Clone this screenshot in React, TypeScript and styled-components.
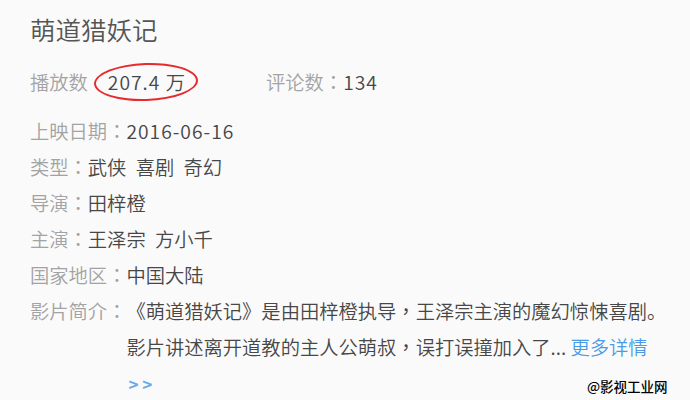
import React from "react";
import styled, { createGlobalStyle } from "styled-components";

const GlobalStyle = createGlobalStyle`
  html, body {
    margin: 0;
    padding: 0;
    background: #fafafa;
  }
  body {
    font-family: "Noto Sans CJK SC", "Microsoft YaHei", "Liberation Sans", sans-serif;
  }
`;

interface IInfoItem {
  label: string;
  value: string;
  numeric?: boolean;
}

const infoList: IInfoItem[] = [
  { label: "上映日期", value: "2016-06-16", numeric: true },
  { label: "类型", value: "武侠 喜剧 奇幻" },
  { label: "导演", value: "田梓橙" },
  { label: "主演", value: "王泽宗 方小千" },
  { label: "国家地区", value: "中国大陆" }
];

const App: React.FC = () => {
  return (
    <>
      <GlobalStyle />
      <Page>
        <Title>萌道猎妖记</Title>
        <Stats>
          <StatItem width={236}>
            <Label>播放数</Label>
            <Marked numeric>207.4 万</Marked>
          </StatItem>
          <StatItem>
            <Label>
              评论数<Colon>：</Colon>
            </Label>
            <Value numeric>134</Value>
          </StatItem>
        </Stats>
        <InfoList>
          {infoList.map(item => (
            <InfoRow key={item.label}>
              <Label>
                {item.label}
                <Colon>：</Colon>
              </Label>
              <Value numeric={item.numeric}>{item.value}</Value>
            </InfoRow>
          ))}
          <InfoRow>
            <Label>
              影片简介<Colon>：</Colon>
            </Label>
            <Summary>
              《萌道猎妖记》是由田梓橙执导<Colon>，</Colon>王泽宗主演的魔幻惊悚喜剧。
              <br />
              影片讲述离开道教的主人公萌叔<Colon>，</Colon>误打误撞加入了...{" "}
              <MoreLink href="#">
                更多详情
                <br />
                <Chevrons>&gt; &gt;</Chevrons>
              </MoreLink>
            </Summary>
          </InfoRow>
        </InfoList>
        <Watermark>@影视工业网</Watermark>
      </Page>
    </>
  );
};

export default App;

const Page = styled.div`
  position: relative;
  width: 690px;
  height: 400px;
  box-sizing: border-box;
  padding: 11px 0 0 30px;
  overflow: hidden;
  background: #fafafa;
`;

const Title = styled.h1`
  margin: 0;
  font-size: 25.5px;
  line-height: 36px;
  font-weight: 350;
  color: #555;
`;

const Stats = styled.div`
  display: flex;
  margin-top: 17px;
  font-size: 19.3px;
  line-height: 36px;
  font-weight: 350;
`;

const StatItem = styled.div<{ width?: number }>`
  display: flex;
  ${({ width }) => (width ? `width: ${width}px;` : "")}
`;

const Label = styled.span`
  color: #a3a3a3;
  white-space: nowrap;
`;

/* centred full-width punctuation, as the Traditional Chinese font draws it */
const Colon = styled.span`
  font-family: "Noto Sans CJK TC", "Noto Sans CJK SC", sans-serif;
  font-weight: 400;
`;

const Value = styled.span<{ numeric?: boolean }>`
  color: #474747;
  white-space: nowrap;
  word-spacing: 5px;
  letter-spacing: ${({ numeric }) => (numeric ? "1px" : "0")};
`;

const Marked = styled(Value)`
  position: relative;
  margin-left: 20px;
  word-spacing: 0;
  &::after {
    content: "";
    position: absolute;
    left: -14px;
    right: -12px;
    top: -1px;
    bottom: -1px;
    border: 2.5px solid #e62a2e;
    border-radius: 50%;
    transform: rotate(-2deg);
  }
`;

const InfoList = styled.div`
  margin-top: 13px;
  font-size: 19.3px;
  line-height: 36px;
  font-weight: 350;
`;

const InfoRow = styled.div`
  display: flex;
`;

const Summary = styled.div`
  color: #474747;
  white-space: nowrap;
`;

const MoreLink = styled.a`
  color: #4a9ae6;
  text-decoration: none;
`;

const Chevrons = styled.span`
  font-size: 17px;
  font-weight: 700;
  padding-left: 2px;
  color: #6aaaf0;
`;

const Watermark = styled.div`
  position: absolute;
  left: 587px;
  top: 377px;
  font-size: 13.5px;
  line-height: 18px;
  font-weight: 500;
  color: #000;
  text-shadow: 0 0 2px #fff;
`;
